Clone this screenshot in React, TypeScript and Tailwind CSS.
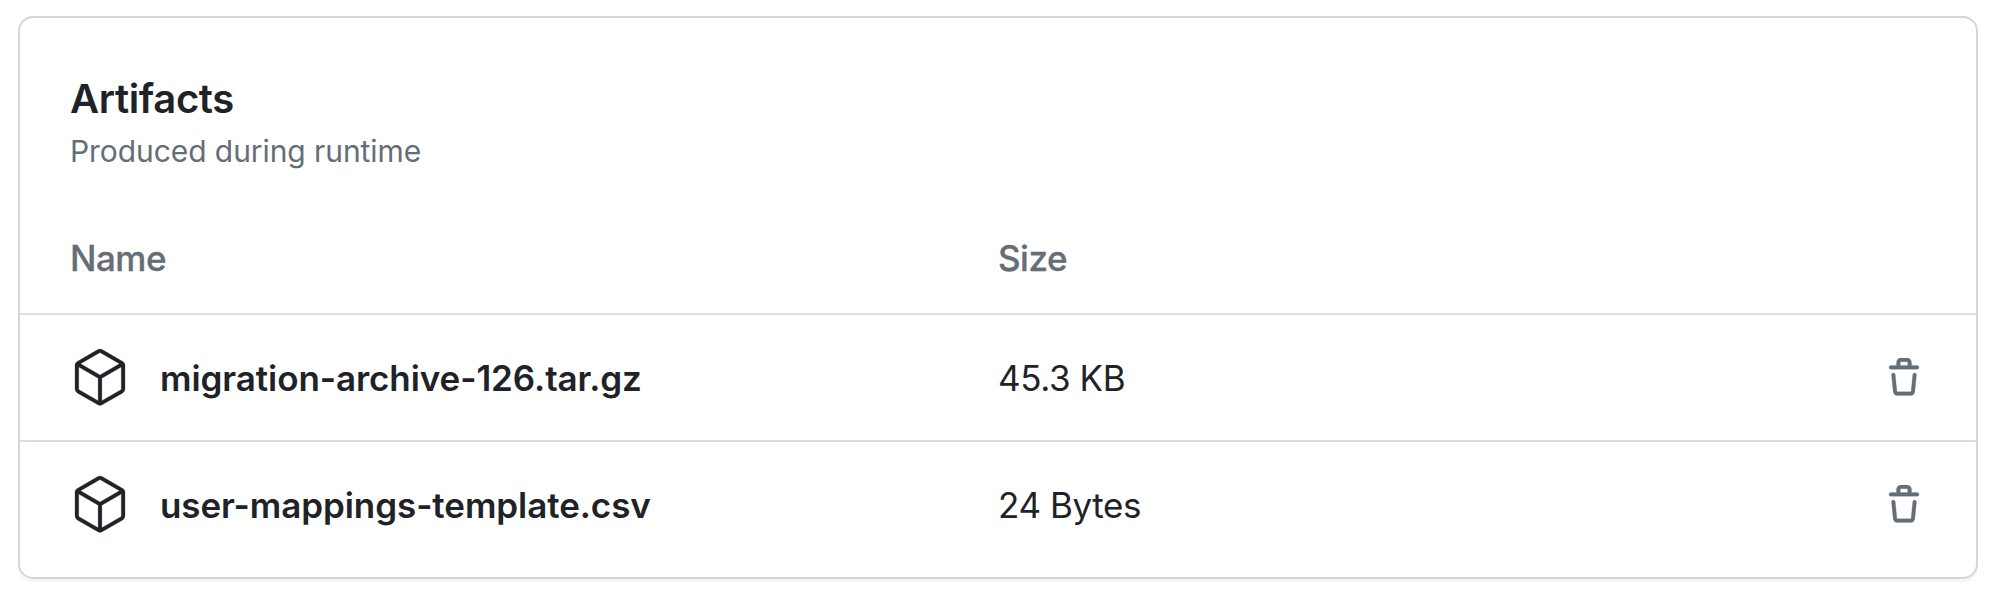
const files = [
  { name: "migration-archive-126.tar.gz", size: "45.3 KB" },
  { name: "user-mappings-template.csv", size: "24 Bytes" },
];

function Cube() {
  return (
    <svg className="h-[60px] w-[60px] shrink-0" viewBox="0 0 24 24" fill="currentColor" stroke="currentColor" strokeWidth="0.1">
      <path d="M12.876.64V.639l8.25 4.763c.541.313.875.89.875 1.515v9.525a1.75 1.75 0 0 1-.875 1.516l-8.25 4.762a1.748 1.748 0 0 1-1.75 0l-8.25-4.763a1.75 1.75 0 0 1-.875-1.515V6.917c0-.625.334-1.202.875-1.515L11.126.64a1.748 1.748 0 0 1 1.75 0Zm-1 1.298L4.251 6.34l7.75 4.474 7.75-4.474-7.625-4.402a.248.248 0 0 0-.25 0Zm.875 19.123 7.625-4.402a.25.25 0 0 0 .125-.216V7.639l-7.75 4.474ZM3.501 7.64v8.803c0 .09.048.172.125.216l7.625 4.402v-8.947Z" />
    </svg>
  );
}

function Trash() {
  return (
    <svg className="h-10 w-10 shrink-0 text-[#656d76]" viewBox="0 0 16 16" fill="currentColor" stroke="currentColor" strokeWidth="0.1">
      <path d="M11 1.75V3h2.25a.75.75 0 0 1 0 1.5H2.75a.75.75 0 0 1 0-1.5H5V1.75C5 .784 5.784 0 6.75 0h2.5C10.216 0 11 .784 11 1.75ZM4.496 6.675l.66 6.6a.25.25 0 0 0 .249.225h5.19a.25.25 0 0 0 .249-.225l.66-6.6a.75.75 0 0 1 1.492.149l-.66 6.6A1.748 1.748 0 0 1 10.595 15h-5.19a1.75 1.75 0 0 1-1.741-1.575l-.66-6.6a.75.75 0 1 1 1.492-.15ZM6.5 1.75V3h3V1.75a.25.25 0 0 0-.25-.25h-2.5a.25.25 0 0 0-.25.25Z" />
    </svg>
  );
}

export default function App() {
  return (
    <main className="h-[612px] bg-white pt-4 pl-[18px] font-['Inter',sans-serif] text-[35px] text-[#1f2328]">
      <section className="flex h-[563px] w-[1960px] flex-col rounded-[15px] border-2 border-[#d0d7de] pb-[10px] shadow-[0_3px_0_rgba(31,35,40,0.04)]">
        <header className="px-[50px] pt-[55px]">
          <h2 className="text-[40px] leading-[52px] font-semibold tracking-[-0.36px]">Artifacts</h2>
          <p className="text-[30px] leading-[52px] tracking-[-0.07px] text-[#656d76]">Produced during runtime</p>
        </header>
        <div className="mt-auto grid h-[108px] grid-cols-[928px_1fr] items-center px-[50px] pb-[1px] font-medium tracking-[-0.5px] text-[#656d76] [-webkit-text-stroke:0.3px_#656d76]">
          <span>Name</span>
          <span>Size</span>
        </div>
        {files.map((f) => (
          <div key={f.name} className="grid h-[127px] grid-cols-[90px_838px_1fr_40px] items-center border-t-2 border-[#d8dee4] pr-[52px] pl-[50px]">
            <Cube />
            <span className="pt-[2px] font-semibold tracking-[-0.08px]">{f.name}</span>
            <span className="pt-[2px] tracking-[-0.4px]">{f.size}</span>
            <Trash />
          </div>
        ))}
      </section>
    </main>
  );
}
